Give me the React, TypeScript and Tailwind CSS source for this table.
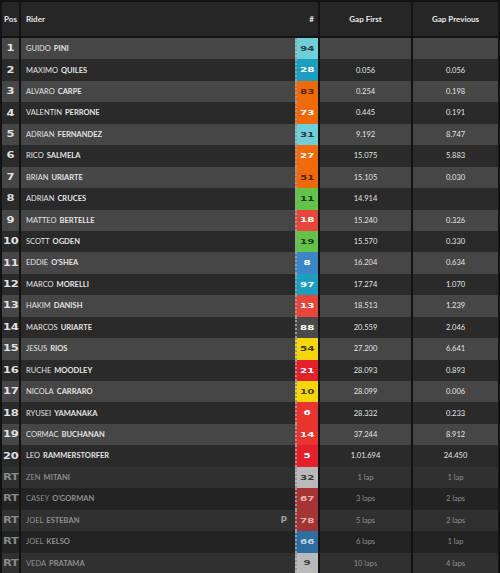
import React from 'react';

type Rider = {
    pos: string;
    first: string;
    last: string;
    num: string;
    box: string;
    numText: string;
    gapFirst: string;
    gapPrev: string;
    flag?: string;
};

const riders: Rider[] = [
    { pos: '1', first: 'GUIDO', last: 'PINI', num: '94', box: 'bg-[#6fcfd9]', numText: 'text-[#2f3b3d]', gapFirst: '', gapPrev: '' },
    { pos: '2', first: 'MAXIMO', last: 'QUILES', num: '28', box: 'bg-[#1b9ec0]', numText: 'text-white', gapFirst: '0.056', gapPrev: '0.056' },
    { pos: '3', first: 'ALVARO', last: 'CARPE', num: '83', box: 'bg-[#f06a0a]', numText: 'text-[#5b2604]', gapFirst: '0.254', gapPrev: '0.198' },
    { pos: '4', first: 'VALENTIN', last: 'PERRONE', num: '73', box: 'bg-[#f06a0a]', numText: 'text-white', gapFirst: '0.445', gapPrev: '0.191' },
    { pos: '5', first: 'ADRIAN', last: 'FERNANDEZ', num: '31', box: 'bg-[#6fcfd9]', numText: 'text-[#2f3b3d]', gapFirst: '9.192', gapPrev: '8.747' },
    { pos: '6', first: 'RICO', last: 'SALMELA', num: '27', box: 'bg-[#f06a0a]', numText: 'text-white', gapFirst: '15.075', gapPrev: '5.883' },
    { pos: '7', first: 'BRIAN', last: 'URIARTE', num: '51', box: 'bg-[#f06a0a]', numText: 'text-[#5b2604]', gapFirst: '15.105', gapPrev: '0.030' },
    { pos: '8', first: 'ADRIAN', last: 'CRUCES', num: '11', box: 'bg-[#62c24a]', numText: 'text-[#1f3a17]', gapFirst: '14.914', gapPrev: '' },
    { pos: '9', first: 'MATTEO', last: 'BERTELLE', num: '18', box: 'bg-[#e8453b]', numText: 'text-white', gapFirst: '15.240', gapPrev: '0.326' },
    { pos: '10', first: 'SCOTT', last: 'OGDEN', num: '19', box: 'bg-[#62c24a]', numText: 'text-[#1f3a17]', gapFirst: '15.570', gapPrev: '0.330' },
    { pos: '11', first: 'EDDIE', last: "O'SHEA", num: '8', box: 'bg-[#3b86c6]', numText: 'text-white', gapFirst: '16.204', gapPrev: '0.634' },
    { pos: '12', first: 'MARCO', last: 'MORELLI', num: '97', box: 'bg-[#1b9ec0]', numText: 'text-white', gapFirst: '17.274', gapPrev: '1.070' },
    { pos: '13', first: 'HAKIM', last: 'DANISH', num: '13', box: 'bg-[#e8453b]', numText: 'text-white', gapFirst: '18.513', gapPrev: '1.239' },
    { pos: '14', first: 'MARCOS', last: 'URIARTE', num: '88', box: 'bg-[#4a4a4a]', numText: 'text-white', gapFirst: '20.559', gapPrev: '2.046' },
    { pos: '15', first: 'JESUS', last: 'RIOS', num: '54', box: 'bg-[#f5d60a]', numText: 'text-[#4a3f05]', gapFirst: '27.200', gapPrev: '6.641' },
    { pos: '16', first: 'RUCHE', last: 'MOODLEY', num: '21', box: 'bg-[#e3202c]', numText: 'text-white', gapFirst: '28.093', gapPrev: '0.893' },
    { pos: '17', first: 'NICOLA', last: 'CARRARO', num: '10', box: 'bg-[#f5d60a]', numText: 'text-[#4a3f05]', gapFirst: '28.099', gapPrev: '0.006' },
    { pos: '18', first: 'RYUSEI', last: 'YAMANAKA', num: '6', box: 'bg-[#e8352d]', numText: 'text-white', gapFirst: '28.332', gapPrev: '0.233' },
    { pos: '19', first: 'CORMAC', last: 'BUCHANAN', num: '14', box: 'bg-[#e8352d]', numText: 'text-white', gapFirst: '37.244', gapPrev: '8.912' },
    { pos: '20', first: 'LEO', last: 'RAMMERSTORFER', num: '5', box: 'bg-[#e3202c]', numText: 'text-white', gapFirst: '1.01.694', gapPrev: '24.450' },
    { pos: 'RT', first: 'ZEN', last: 'MITANI', num: '32', box: 'bg-[#b9b9b9]', numText: 'text-[#3a3a3a]', gapFirst: '1 lap', gapPrev: '1 lap' },
    { pos: 'RT', first: 'CASEY', last: "O'GORMAN", num: '67', box: 'bg-[#a53434]', numText: 'text-[#e8b0b0]', gapFirst: '3 laps', gapPrev: '2 laps' },
    { pos: 'RT', first: 'JOEL', last: 'ESTEBAN', num: '78', box: 'bg-[#a53434]', numText: 'text-[#e8b0b0]', gapFirst: '5 laps', gapPrev: '2 laps', flag: 'P' },
    { pos: 'RT', first: 'JOEL', last: 'KELSO', num: '66', box: 'bg-[#2e6e9e]', numText: 'text-[#b8d0e4]', gapFirst: '6 laps', gapPrev: '1 lap' },
    { pos: 'RT', first: 'VEDA', last: 'PRATAMA', num: '9', box: 'bg-[#b9b9b9]', numText: 'text-[#3a3a3a]', gapFirst: '10 laps', gapPrev: '4 laps' },
];

const squareFont = { fontFamily: '"DejaVu Sans", sans-serif' };

const App = () => {
    return (
        <div
            className="w-[500px] h-[573px] overflow-hidden bg-[#131313] pt-[2px] px-[2px]"
            style={{ fontFamily: 'Lato, "Open Sans", sans-serif' }}
        >
            {/* 헤더 */}
            <div className="flex h-[34px] bg-[#262626] text-[8px] font-bold text-[#e6e6e6]">
                <div className="w-[17px] flex items-center justify-center">Pos</div>
                <div className="w-[2px] bg-[#131313]" />
                <div className="w-[297px] flex items-center justify-between pl-[5px] pr-[4px]">
                    <span>Rider</span>
                    <span>#</span>
                </div>
                <div className="w-[2px] bg-[#131313]" />
                <div className="w-[91px] flex items-center justify-center">Gap First</div>
                <div className="w-[2px] bg-[#131313]" />
                <div className="flex-1 flex items-center justify-center">Gap Previous</div>
            </div>

            {/* 순위 목록 */}
            <div className="mt-[2px]">
                {riders.map((r, i) => {
                    const retired = r.pos === 'RT';
                    const light = i % 2 === 0;
                    const bg = retired
                        ? light ? 'bg-[#303030]' : 'bg-[#232323]'
                        : light ? 'bg-[#464646]' : 'bg-[#2a2a2a]';
                    const txt = retired ? 'text-[#8f8f8f]' : 'text-[#e4e4e4]';
                    return (
                        <div key={i} className={`flex h-[21.44px] ${bg}`}>
                            <div className="w-[17px] flex items-center justify-center">
                                <span
                                    className={`text-[10px] font-bold tracking-[-0.3px] scale-x-[1.15] scale-y-[0.8] ${retired ? 'text-[#8a8a8a]' : 'text-[#e0e0e0]'}`}
                                    style={squareFont}
                                >
                                    {r.pos}
                                </span>
                            </div>
                            <div className="w-[2px] bg-[#131313]" />
                            <div className={`w-[274px] flex items-center pl-[5px] text-[7.5px] ${txt}`}>
                                <span>{r.first}</span>
                                <span className="ml-[3px] font-bold">{r.last}</span>
                                {r.flag && (
                                    <span className="ml-auto mr-[8px] text-[9px] font-bold text-[#9a9a9a]" style={squareFont}>
                                        {r.flag}
                                    </span>
                                )}
                            </div>
                            <div
                                className={`w-[23px] flex items-center justify-center border-l-[2px] border-dotted border-[#9a9a9a] ${r.box}`}
                            >
                                <span
                                    className={`${r.numText} text-[9px] font-bold scale-x-[1.15] scale-y-[0.85]`}
                                    style={squareFont}
                                >
                                    {r.num}
                                </span>
                            </div>
                            <div className="w-[2px] bg-[#131313]" />
                            <div className={`w-[91px] flex items-center justify-center text-[7.5px] ${txt}`}>
                                {r.gapFirst}
                            </div>
                            <div className="w-[2px] bg-[#131313]" />
                            <div className={`flex-1 flex items-center justify-center text-[7.5px] ${txt}`}>
                                {r.gapPrev}
                            </div>
                        </div>
                    );
                })}
            </div>
        </div>
    );
};

export default App;
